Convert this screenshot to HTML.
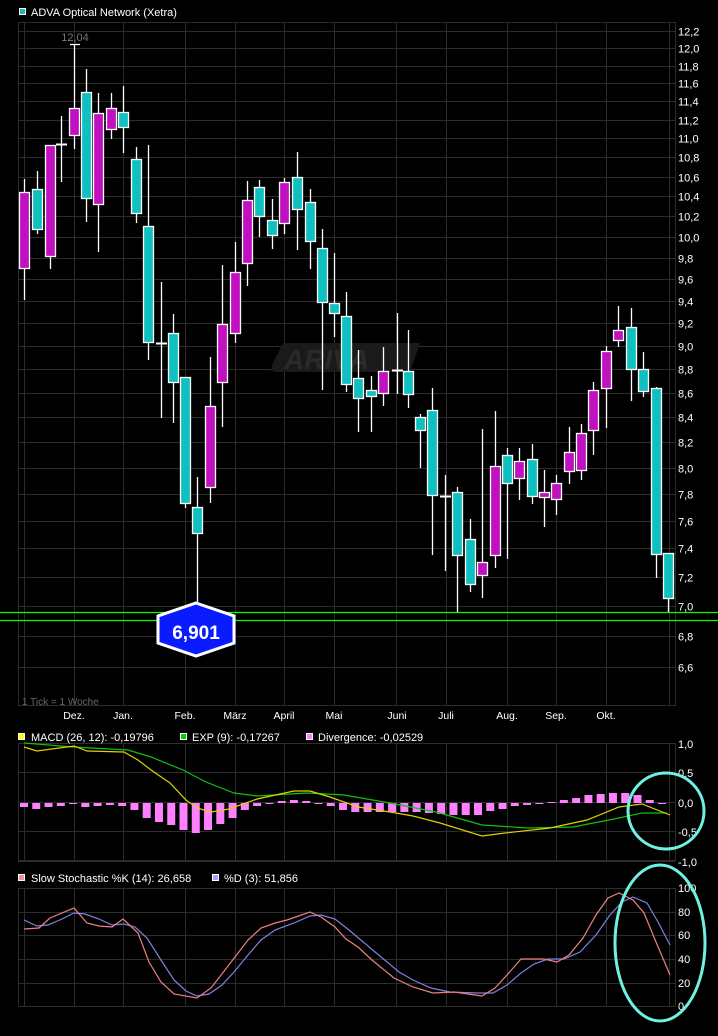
<!DOCTYPE html>
<html><head><meta charset="utf-8"><style>
html,body{margin:0;padding:0;background:#000;}
svg{display:block;font-family:"Liberation Sans",sans-serif;}
</style></head><body>
<svg id="s" width="718" height="1036" viewBox="0 0 718 1036" xmlns="http://www.w3.org/2000/svg">
<rect width="718" height="1036" fill="#000"/>
<g id="grid" stroke="#2c2c2c" stroke-width="1" fill="none"></g>
<!-- watermark -->
<g>
<path d="M283 343 H420 L410 372 H277 Q270 372 272 365 Z" fill="#1a1a1a"/>
<text x="284" y="369" font-size="28" font-weight="bold" font-style="italic" fill="#2a2a2a">ARIVA</text>
</g>
<g id="candles"></g>
<g id="lines"></g>
<!-- green horizontals -->
<line x1="0" y1="612.5" x2="718" y2="612.5" stroke="#00ff00" stroke-width="1.2"/>
<line x1="0" y1="620.5" x2="718" y2="620.5" stroke="#00ff00" stroke-width="1.2"/>
<!-- hexagon marker -->
<polygon points="196,603 234,616 234,643 196,656 158,643 158,616" fill="#0a1cff" stroke="#fff" stroke-width="3"/>
<text x="196" y="639" font-size="19" font-weight="bold" fill="#fff" text-anchor="middle">6,901</text>
<!-- titles -->
<rect x="19.5" y="8.5" width="6" height="6" fill="#10c0c0" stroke="#fff" stroke-width="1"/>
<text x="31" y="16" font-size="11" fill="#fff">ADVA Optical Network (Xetra)</text>
<text x="75" y="41" font-size="11" fill="#777" text-anchor="middle">12,04</text>
<text x="22" y="705" font-size="10" fill="#666">1 Tick = 1 Woche</text>
<g font-size="10.5" fill="#fff" text-anchor="middle">
<text x="74" y="719">Dez.</text><text x="123" y="719">Jan.</text><text x="185" y="719">Feb.</text>
<text x="235" y="719">März</text><text x="284" y="719">April</text><text x="334" y="719">Mai</text>
<text x="397" y="719">Juni</text><text x="446" y="719">Juli</text><text x="507" y="719">Aug.</text>
<text x="556" y="719">Sep.</text><text x="606" y="719">Okt.</text>
</g>
<rect x="18.5" y="733.5" width="6" height="6" fill="#ffff00" stroke="#fff"/>
<text x="31" y="741" font-size="11" fill="#fff">MACD (26, 12): -0,19796</text>
<rect x="180.5" y="733.5" width="6" height="6" fill="#00d000" stroke="#fff"/>
<text x="192" y="741" font-size="11" fill="#fff">EXP (9): -0,17267</text>
<rect x="306.5" y="733.5" width="6" height="6" fill="#ff80ff" stroke="#fff"/>
<text x="318" y="741" font-size="11" fill="#fff">Divergence: -0,02529</text>
<rect x="18.5" y="874.5" width="6" height="6" fill="#f09090" stroke="#fff"/>
<text x="31" y="882" font-size="11" fill="#fff">Slow Stochastic %K (14): 26,658</text>
<rect x="212.5" y="874.5" width="6" height="6" fill="#a0a0ff" stroke="#fff"/>
<text x="224" y="882" font-size="11" fill="#fff">%D (3): 51,856</text>
<g id="axis" font-size="11" fill="#fff"></g>
<ellipse cx="666" cy="811" rx="38" ry="38" fill="none" stroke="#70f0e0" stroke-width="3"/>
<ellipse cx="660" cy="943" rx="45" ry="78" fill="none" stroke="#70f0e0" stroke-width="3"/>
</svg>
<script>
var NS="http://www.w3.org/2000/svg";
function el(p,t,a,txt){var e=document.createElementNS(NS,t);for(var k in a)e.setAttribute(k,a[k]);if(txt!==undefined)e.textContent=txt;document.getElementById(p).appendChild(e);return e;}
function y(p){return 31+1035*Math.log(12.2/p);}
// main frame
el("grid","rect",{x:18.5,y:22.5,width:657,height:683});
for(var i=0;i<=28;i++){var p=6.6+i*0.2;var yy=Math.round(y(p))+0.5;el("grid","line",{x1:18,y1:yy,x2:675,y2:yy});
 el("axis","text",{x:678,y:yy+4},p.toFixed(1).replace(".",","));}
var vx=[24,74,123,185,235,284,334,396,446,507,556,606,669];
vx.forEach(function(x){el("grid","line",{x1:x+.5,y1:22,x2:x+.5,y2:705});el("grid","line",{x1:x+.5,y1:743,x2:x+.5,y2:860});el("grid","line",{x1:x+.5,y1:888,x2:x+.5,y2:1006});});
// macd frame
el("grid","rect",{x:18.5,y:743.5,width:657,height:117});
[[744,"1,0"],[773,"0,5"],[803,"0,0"],[832,"-0,5"],[862,"-1,0"]].forEach(function(a){el("grid","line",{x1:18,y1:a[0]-.5,x2:675,y2:a[0]-.5});el("axis","text",{x:678,y:a[0]+4},a[1]);});
// stoch frame
el("grid","rect",{x:18.5,y:888.5,width:657,height:118});
[[888,"100"],[912,"80"],[935,"60"],[959,"40"],[983,"20"],[1006,"0"]].forEach(function(a){el("grid","line",{x1:18,y1:a[0]+.5,x2:675,y2:a[0]+.5});el("axis","text",{x:678,y:a[0]+4},a[1]);});
// candles
var C=[[24,192,268,179,300,"m"],[37,189,229,171,234,"c"],[50,145,256,145,269,"m"],[61,144,144,116,182,"d"],[74,108,135,44,149,"m"],[86,92,198,69,222,"c"],[98,113,204,93,252,"m"],[111,108,129,93,139,"m"],[123,112,127,86,153,"c"],[136,159,213,147,223,"c"],[148,226,342,145,360,"c"],[161,343,343,282,418,"d"],[173,333,382,314,423,"c"],[185,377,503,377,508,"c"],[197,507,533,477,605,"c"],[210,406,487,357,503,"m"],[222,324,382,265,427,"m"],[235,272,333,242,343,"m"],[247,200,263,181,286,"m"],[259,187,216,180,237,"c"],[272,220,235,199,249,"c"],[284,182,223,178,234,"m"],[297,177,209,152,250,"c"],[310,202,241,189,269,"c"],[322,248,302,229,390,"c"],[334,303,313,253,337,"c"],[346,316,384,292,392,"c"],[358,378,398,350,432,"c"],[371,390,396,376,432,"c"],[383,371,393,347,406,"m"],[397,370,370,313,394,"d"],[408,371,394,330,408,"c"],[420,417,430,414,468,"c"],[432,410,495,388,555,"c"],[445,496,496,475,571,"d"],[457,492,555,487,612,"c"],[470,539,584,519,592,"c"],[482,562,575,429,598,"m"],[495,466,555,411,568,"m"],[507,455,483,448,559,"c"],[519,461,478,448,500,"m"],[532,459,496,444,504,"c"],[544,492,497,470,527,"m"],[556,483,499,475,515,"m"],[569,452,471,427,484,"m"],[581,433,470,424,480,"m"],[593,390,430,382,455,"m"],[606,351,388,346,428,"m"],[618,330,340,306,347,"m"],[631,327,369,308,401,"c"],[643,369,391,352,397,"c"],[656,388,554,387,578,"c"],[668,553,598,553,613,"c"]];
C.forEach(function(c){var x=c[0]+.5;el("candles","line",{x1:x,y1:c[3],x2:x,y2:c[4],stroke:"#fff","stroke-width":1.3});
 if(c[5]=="d"){el("candles","line",{x1:x-5.5,y1:c[1]+.5,x2:x+5.5,y2:c[1]+.5,stroke:"#fff","stroke-width":2});}
 else{el("candles","rect",{x:c[0]-4.5,y:c[1]+.5,width:10,height:Math.max(c[2]-c[1],2),fill:c[5]=="c"?"#10c0c0":"#c010c0",stroke:"#fff","stroke-width":1.3});}});
el("candles","line",{x1:70,y1:44.5,x2:80,y2:44.5,stroke:"#fff","stroke-width":1.3});
// histogram
var H=[-4,-6,-4,-3,-1,-4,-3,-2,-3,-7,-15,-19,-22,-27,-30,-27,-21,-15,-7,-3,-1,2,3,2,-1,-3,-7,-9,-9,-9,-9,-9,-9,-10,-11,-12,-12,-12,-8,-6,-3,-2,-1,1,3,5,8,9,10,10,8,3,-1];
H.forEach(function(h,i){var x=24+i*12.27;var t=h>0?803-h:803;el("lines","rect",{x:x-4,y:t,width:8,height:Math.max(Math.abs(h),1),fill:"#ff80ff"});});
function pl(pts,col,w){el("lines","polyline",{points:pts,fill:"none",stroke:col,"stroke-width":w||1.2});}
pl("24,743 73,747 128,750 151,757 183,770 206,782 234,793 257,796 307,793 344,795 390,803 436,812 482,825 528,828 573,827 619,818 642,813 667,813","#10c010");
pl("24,747 37,751 74,746 87,751 124,752 138,760 151,770 170,783 186,800 197,808 211,812 229,809 257,799 294,791 310,791 330,797 358,807 390,812 413,816 440,823 482,836 505,833 550,828 587,820 619,807 642,804 670,815","#e0d000");
pl("24,920 37,926 48,925 62,919 74,913 85,914 99,919 112,925 124,924 135,927 147,938 161,960 174,980 186,991 197,996 209,994 222,985 234,972 248,955 261,940 275,930 294,923 310,916 321,915 335,919 349,930 362,941 381,957 399,972 413,980 431,988 450,992 477,993 493,993 507,985 521,973 534,964 548,959 564,959 580,952 596,935 610,915 622,902 633,897 647,903 658,922 670,945","#8080e0");
pl("24,929 39,928 50,918 74,908 87,923 99,926 112,927 123,919 138,933 149,962 161,982 174,994 197,998 211,988 225,970 248,940 261,928 275,923 287,920 310,912 321,917 335,927 346,939 358,947 372,960 394,978 413,987 433,993 454,992 482,996 495,988 507,975 521,959 544,959 557,962 569,955 583,938 596,915 608,898 619,893 633,900 644,913 656,942 670,975","#f08080");
</script>
</body></html>
